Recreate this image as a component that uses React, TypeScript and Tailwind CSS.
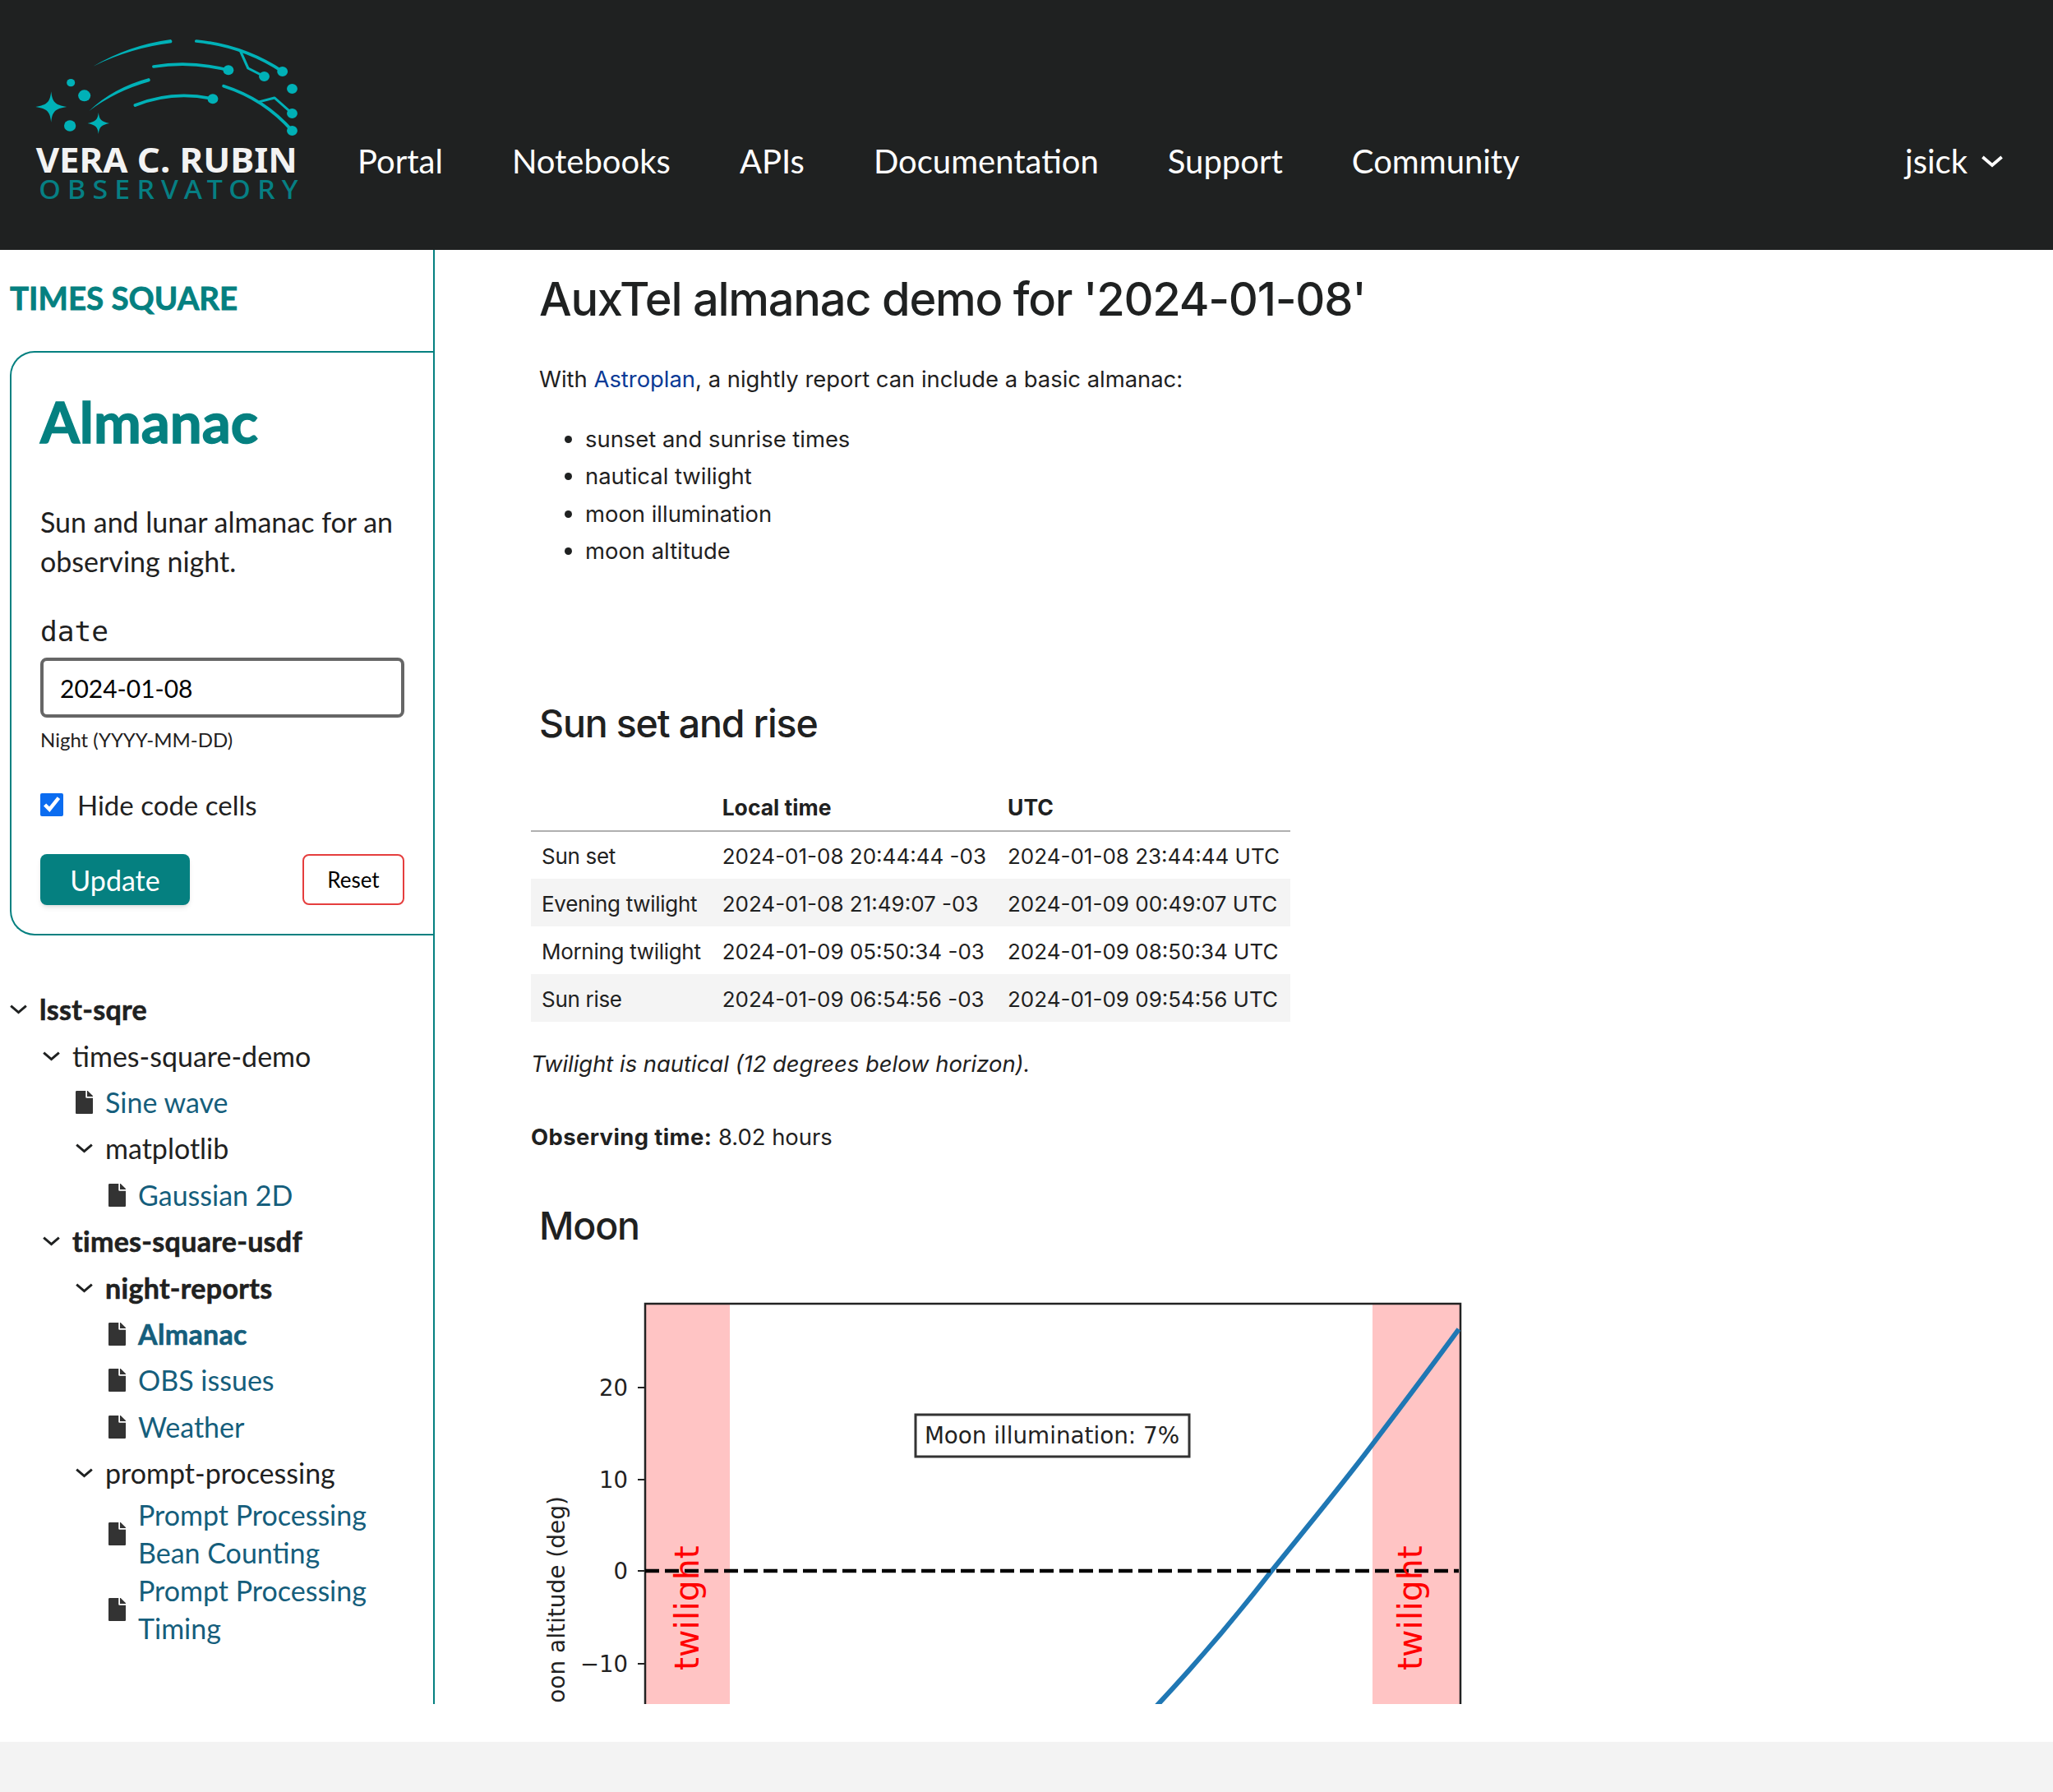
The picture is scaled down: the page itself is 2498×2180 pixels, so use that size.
import { FaFile } from "react-icons/fa";

const navItems = ["Portal", "Notebooks", "APIs", "Documentation", "Support", "Community"];

const almanacRows = [
  ["Sun set", "2024-01-08 20:44:44 -03", "2024-01-08 23:44:44 UTC"],
  ["Evening twilight", "2024-01-08 21:49:07 -03", "2024-01-09 00:49:07 UTC"],
  ["Morning twilight", "2024-01-09 05:50:34 -03", "2024-01-09 08:50:34 UTC"],
  ["Sun rise", "2024-01-09 06:54:56 -03", "2024-01-09 09:54:56 UTC"],
];

type TreeNode = {
  title: string;
  bold?: boolean;
  children?: TreeNode[];
};

const tree: TreeNode[] = [
  {
    title: "lsst-sqre",
    bold: true,
    children: [
      {
        title: "times-square-demo",
        children: [
          { title: "Sine wave" },
          { title: "matplotlib", children: [{ title: "Gaussian 2D" }] },
        ],
      },
      {
        title: "times-square-usdf",
        bold: true,
        children: [
          {
            title: "night-reports",
            bold: true,
            children: [
              { title: "Almanac", bold: true },
              { title: "OBS issues" },
              { title: "Weather" },
            ],
          },
          {
            title: "prompt-processing",
            children: [
              { title: "Prompt Processing Bean Counting" },
              { title: "Prompt Processing Timing" },
            ],
          },
        ],
      },
    ],
  },
];

function Chevron({ className }: { className?: string }) {
  return (
    <svg viewBox="0 0 21 12" className={className} fill="none" stroke="currentColor" strokeWidth="3">
      <path d="M1.2 1.6 10.5 9.6 19.8 1.6" />
    </svg>
  );
}

function Logo() {
  const teal = "#00b1b7";
  return (
    <svg viewBox="110 130 920 660" preserveAspectRatio="none" className="w-[329px] h-[220px] shrink-0 mt-[43px] ml-[39px]">
      <g fill={teal}>
        <path d="M318 243Q440 166 582 145Q590 151 584 158Q445 176 318 243Z" />
        <path d="M304 406Q385 322 508 286Q516 293 509 299Q395 333 304 406Z" />
        <circle cx="242" cy="303" r="14" />
        <circle cx="288" cy="350" r="21" />
        <circle cx="239" cy="460" r="20" />
        <circle cx="962" cy="262" r="18" />
        <circle cx="900" cy="280" r="18" />
        <circle cx="778" cy="257" r="18" />
        <circle cx="995" cy="325" r="18" />
        <circle cx="995" cy="415" r="18" />
        <circle cx="995" cy="478" r="18" />
        <circle cx="725" cy="362" r="18" />
        <path d="M175 335C179 374 188 384 228 391C188 398 179 408 175 447C171 408 162 398 122 391C162 384 171 374 175 335Z" />
        <path d="M336 412C339 438 346 445 373 451C346 457 339 464 336 490C333 464 326 457 299 451C326 445 333 438 336 412Z" />
      </g>
      <g fill="none" stroke={teal} strokeWidth="11" strokeLinecap="round" strokeLinejoin="round">
        <path d="M669 151Q830 168 962 262" />
        <path d="M820 190 845 250 900 280" strokeWidth="9" />
        <path d="M524 244Q650 222 778 257" />
        <path d="M762 315Q900 362 995 478" />
        <path d="M885 372 935 358 995 415" strokeWidth="9" />
        <path d="M461 385Q590 330 725 362" />
      </g>
      <text x="123" y="631" textLength="890" lengthAdjust="spacingAndGlyphs" fontSize="126" fontWeight="700" fill="#f3f3f3" fontFamily="'Noto Sans', sans-serif">
        VERA C. RUBIN
      </text>
      <text x="133" y="727" textLength="882" lengthAdjust="spacing" fontSize="95" fontWeight="500" fill="#067f83" fontFamily="'Noto Sans', sans-serif">
        OBSERVATORY
      </text>
    </svg>
  );
}

function Header() {
  return (
    <header className="h-[304px] bg-[#1f2121] flex items-start text-white font-['Lato',sans-serif] text-[40px] leading-[48px]">
      <Logo />
      <nav className="flex gap-[84px] ml-[67px] mt-[172px]">
        {navItems.map((item) => (
          <a key={item}>{item}</a>
        ))}
      </nav>
      <div className="ml-auto mr-[60px] mt-[172px] flex items-center gap-[16px]">
        jsick
        <Chevron className="w-[28px] h-[15px]" />
      </div>
    </header>
  );
}

const heavy = "font-bold tracking-[0.3px] [-webkit-text-stroke:0.6px_currentColor]";

function TreeItem({ node }: { node: TreeNode }) {
  if (node.children) {
    return (
      <li>
        <div className="flex items-center min-h-[56.4px]">
          <Chevron className="w-[21px] h-[12px] shrink-0 mr-[15px]" />
          <span className={node.bold ? heavy : ""}>{node.title}</span>
        </div>
        <ul className="ml-[40px]">
          {node.children.map((child) => (
            <TreeItem key={child.title} node={child} />
          ))}
        </ul>
      </li>
    );
  }
  return (
    <li className="flex items-center min-h-[56.4px]">
      <FaFile className="w-[21px] h-[28px] shrink-0 mr-[15px] text-[#333]" />
      <a className={`text-[#155e7c] max-w-[320px] ${node.bold ? heavy : ""}`}>{node.title}</a>
    </li>
  );
}

function Sidebar() {
  return (
    <aside className="w-[529px] shrink-0 border-r-2 border-[#058080] text-[#1f2121] font-['Lato',sans-serif] overflow-hidden">
      <h2 className="mt-[34px] ml-[12px] text-[38.5px] leading-[48px] font-bold [-webkit-text-stroke:0.8px_#058080] text-[#058080] uppercase">Times Square</h2>
      <section className="mt-[41px] ml-[12px] h-[711px] border-2 border-r-0 border-[#058080] rounded-l-[30px] pl-[35px] pr-[35px] pt-[46px]">
        <h1 className="text-[69px] leading-[76px] font-bold [-webkit-text-stroke:1.4px_#058080] text-[#058080]">Almanac</h1>
        <p className="mt-[60px] text-[34px] leading-[48px]">Sun and lunar almanac for an observing night.</p>
        <label className="block mt-[39px] font-['DejaVu_Sans_Mono',monospace] text-[34.5px] leading-[44px]">date</label>
        <input
          defaultValue="2024-01-08"
          className="block mt-[10px] w-full h-[73px] border-4 border-[#666] rounded-[8px] px-[20px] text-[30px] text-black"
        />
        <p className="mt-[9px] text-[24px] leading-[36px]">Night (YYYY-MM-DD)</p>
        <label className="mt-[39px] flex items-center gap-[17px] text-[33px] leading-[44px]">
          <input type="checkbox" defaultChecked className="w-[28px] h-[28px] m-0 accent-[#0b6cf0]" />
          Hide code cells
        </label>
        <div className="mt-[38px] flex justify-between">
          <button className="w-[182px] h-[62px] bg-[#058080] text-white text-[34px] rounded-[8px] shadow-md">Update</button>
          <button className="w-[124px] h-[62px] border-2 border-[#e53e3e] text-black text-[26px] rounded-[8px]">Reset</button>
        </div>
      </section>
      <ul className="mt-[62px] ml-[12px] text-[34px] leading-[46px]">
        {tree.map((node) => (
          <TreeItem key={node.title} node={node} />
        ))}
      </ul>
    </aside>
  );
}

function MoonPlot() {
  const dejavu = "'DejaVu Sans', sans-serif";
  const ticks = [
    { y: 1688, label: "20" },
    { y: 1800, label: "10" },
    { y: 1911, label: "0" },
    { y: 2024, label: "\u221210" },
  ];
  return (
    <svg viewBox="640 1560 1170 520" className="block w-[1170px] h-[520px] -ml-[6px] mt-[39px] shrink-0">
      <rect x="785" y="1586" width="103" height="494" fill="#ffc4c4" />
      <rect x="1670" y="1586" width="107" height="494" fill="#ffc4c4" />
      <path d="M785 2080V1586H1777V2080" fill="none" stroke="#222" strokeWidth="2.5" />
      {ticks.map((t) => (
        <g key={t.label}>
          <path d={`M776 ${t.y}H785`} stroke="#222" strokeWidth="2" />
          <text x="764" y={t.y + 10} textAnchor="end" fontSize="27.5" fill="#222" fontFamily={dejavu}>
            {t.label}
          </text>
        </g>
      ))}
      <path d="M1400 2083C1450 2030 1500 1972 1548 1910C1590 1858 1630 1810 1670 1757C1708 1707 1742 1662 1775 1617" fill="none" stroke="#1f77b4" strokeWidth="6" />
      <path d="M785 1911H1775" stroke="#000" strokeWidth="4.5" strokeDasharray="17 7" />
      <text transform="translate(850 2032) rotate(-90)" fontSize="41" fill="#ff0000" fontFamily={dejavu}>twilight</text>
      <text transform="translate(1730 2032) rotate(-90)" fontSize="41" fill="#ff0000" fontFamily={dejavu}>twilight</text>
      <text transform="translate(687 1820) rotate(-90)" textAnchor="end" fontSize="28" fill="#222" fontFamily={dejavu}>
        Moon altitude (deg)
      </text>
      <rect x="1114" y="1721" width="333" height="51" fill="#fff" stroke="#333" strokeWidth="3" />
      <text x="1280" y="1756" textAnchor="middle" fontSize="27.8" fill="#222" fontFamily={dejavu}>
        Moon illumination: 7%
      </text>
    </svg>
  );
}

function Content() {
  return (
    <main className="flex-1 min-w-0 overflow-hidden pl-[117px] text-[#1f2121] font-['Inter',sans-serif] text-[27.4px] leading-[44px]">
      <h1 className="mt-[26px] pl-[10px] text-[56px] leading-[68px] font-medium tracking-[-1.26px]">AuxTel almanac demo for '2024-01-08'</h1>
      <p className="mt-[41px] pl-[10px]">
        With <a className="text-[#0a3a96]">Astroplan</a>, a nightly report can include a basic almanac:
      </p>
      <ul className="mt-[29px] pl-[66px] list-disc">
        <li className="h-[45.3px]">sunset and sunrise times</li>
        <li className="h-[45.3px]">nautical twilight</li>
        <li className="h-[45.3px]">moon illumination</li>
        <li className="h-[45.3px]">moon altitude</li>
      </ul>
      <h2 className="mt-[157px] pl-[10px] text-[46.5px] leading-[60px] font-medium tracking-tight">Sun set and rise</h2>
      <table className="mt-[45px] border-collapse text-[26px]">
        <thead>
          <tr className="h-[56px] border-b-2 border-[#b0b0b0]">
            <th className="px-[13px]"></th>
            <th className="px-[13px] pb-[1px] text-left font-bold text-[26.5px]">Local time</th>
            <th className="px-[13px] pb-[1px] text-left font-bold text-[26.5px]">UTC</th>
          </tr>
        </thead>
        <tbody>
          {almanacRows.map((row, index) => (
            <tr key={row[0]} className={`h-[58px] ${index % 2 === 1 ? "bg-[#f4f4f4]" : ""}`}>
              <td className="px-[13px] pt-[3px] whitespace-nowrap tracking-[-0.3px]">{row[0]}</td>
              <td className="px-[13px] pt-[3px] whitespace-nowrap">{row[1]}</td>
              <td className="px-[13px] pt-[3px] whitespace-nowrap">{row[2]}</td>
            </tr>
          ))}
        </tbody>
      </table>
      <p className="mt-[29px] italic">Twilight is nautical (12 degrees below horizon).</p>
      <p className="mt-[45px]">
        <strong className="font-bold tracking-[0.4px]">Observing time:</strong> 8.02 hours
      </p>
      <h2 className="mt-[56px] pl-[10px] text-[46.5px] leading-[60px] font-medium tracking-tight">Moon</h2>
      <MoonPlot />
    </main>
  );
}

export default function App() {
  return (
    <div className="bg-white flex flex-col h-[2180px] overflow-hidden">
      <Header />
      <div className="flex h-[1769px]">
        <Sidebar />
        <Content />
      </div>
      <div className="mt-[46px] flex-1 bg-[#f3f3f3]"></div>
    </div>
  );
}
